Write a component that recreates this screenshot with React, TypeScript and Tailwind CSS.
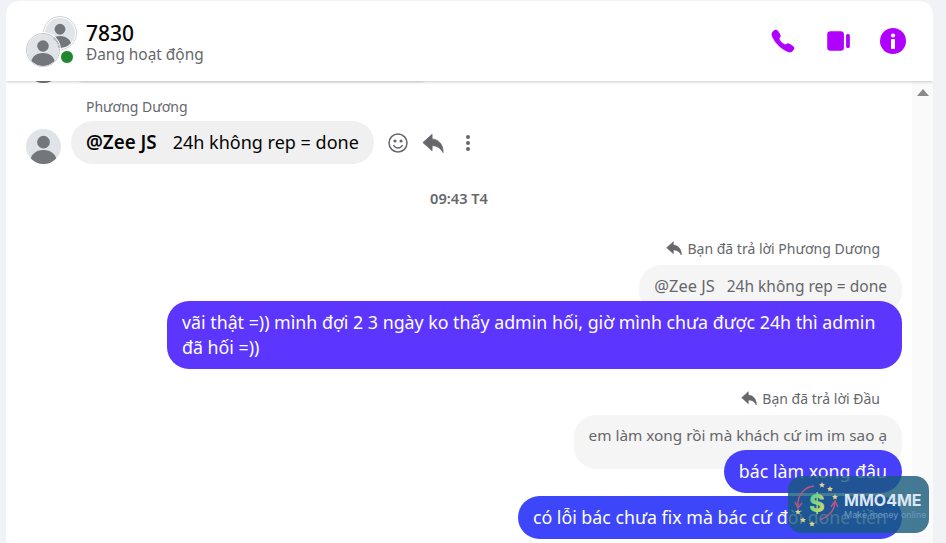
import React from "react";
import { IoCall } from "react-icons/io5";

const Avatar = ({ size }: { size: string }) => (
  <div className={`${size} rounded-full overflow-hidden bg-[#e0e3e7] shrink-0`}>
    <svg viewBox="0 0 36 36" className="w-full h-full">
      <circle cx="18" cy="13.5" r="6.5" fill="#73767b" />
      <path d="M4 36c0-10 6-14.5 14-14.5S32 26 32 36z" fill="#73767b" />
    </svg>
  </div>
);

const ReplyIcon = ({ className }: { className: string }) => (
  <svg viewBox="0 0 24 24" className={className} fill="#65676b">
    <path d="M11 2.500 1 11.500 11 20.500 V15 C16 15 20 17 23 22.500 C23.500 13.500 18 8 11 7.500 Z" stroke="#65676b" strokeWidth="0.8" strokeLinejoin="round" />
  </svg>
);

const Sent = ({ color, text }: { color: string; text: React.ReactNode }) => (
  <div className={`relative px-[15px] py-[9px] rounded-[22px] text-[17.8px] leading-[25px] text-white ${color}`}>{text}</div>
);

const ReplyLabel = ({ text }: { text: string }) => (
  <div className="flex items-center justify-end gap-[5px] pr-[22px] h-[20px] text-[14px] text-[#65676b]">
    <ReplyIcon className="w-[16px] h-[16px]" />
    <span>{text}</span>
  </div>
);

const Star = ({ x, y }: { x: number; y: number }) => (
  <polygon
    transform={`translate(${x} ${y})`}
    points="0,-3 0.9,-1 3,-0.9 1.4,0.5 1.9,2.6 0,1.5 -1.9,2.6 -1.4,0.5 -3,-0.9 -0.9,-1"
    fill="#e6d48a"
  />
);

export default function App() {
  return (
    <div className="relative w-[946px] h-[543px] overflow-hidden bg-[#f0f2f5] pl-[6px] pr-[13px] pt-[1px] font-['Noto_Sans','Open_Sans',sans-serif]">
      <div className="w-full h-[542px] bg-white rounded-t-[14px] flex flex-col overflow-hidden">
        <header className="relative z-10 h-[80px] shrink-0 flex items-center justify-between pl-[20px] pr-[27px] bg-white shadow-[0_1px_3px_rgba(0,0,0,0.2)]">
          <div className="flex items-center gap-[8px]">
            <div className="relative w-[52px] h-[52px]">
              <div className="absolute left-[17px] top-[1px] w-[34px] h-[34px] rounded-full bg-white border border-[#d0d2d6] p-[1px]">
                <Avatar size="w-full h-full" />
              </div>
              <div className="absolute left-0 bottom-0 w-[34px] h-[34px] rounded-full border border-[#c8cacd] overflow-hidden shadow-[0_0_0_1px_#fff]">
                <Avatar size="w-full h-full" />
              </div>
              <div className="absolute left-[34px] top-[35px] w-[14px] h-[14px] rounded-full bg-[#22852f] border border-white" />
            </div>
            <div className="flex flex-col mt-[4px]">
              <span className="text-[21px] leading-[24px] font-medium text-[#050505]">7830</span>
              <span className="text-[15.4px] leading-[20px] text-[#65676b]">Đang hoạt động</span>
            </div>
          </div>
          <div className="flex items-center gap-[28px]">
            <IoCall className="w-[26px] h-[26px] text-[#b000ff]" />
            <svg viewBox="0 0 26 24" className="w-[28px] h-[26px]" fill="#b000ff">
              <rect x="3" y="3" width="15.5" height="18" rx="3" />
              <rect x="20.5" y="5.5" width="3.5" height="13" rx="1.5" />
            </svg>
            <svg viewBox="0 0 26 26" className="w-[26px] h-[26px]">
              <circle cx="13" cy="13" r="13" fill="#b000ff" />
              <circle cx="13" cy="7.5" r="2.1" fill="#fff" />
              <rect x="11" y="11" width="4" height="10" rx="1" fill="#fff" />
            </svg>
          </div>
        </header>

        <div className="relative flex-1 flex min-h-0">
          <main className="flex-1 min-w-0 overflow-hidden">
            <div className="mt-[-33px] pl-[20px] flex items-end gap-[10px]">
              <Avatar size="w-[35px] h-[35px]" />
              <div className="w-[362px] h-[27px] rounded-[18px] bg-[#f0f0f0]" />
            </div>
            <div className="pl-[80px] mt-[14px] h-[20px] text-[14px] leading-[20px] text-[#65676b]">Phương Dương</div>
            <div className="mt-[4px] pl-[20px] flex items-center gap-[10px]">
              <Avatar size="w-[35px] h-[35px] mt-[8px]" />
              <div className="h-[43px] flex items-center px-[15px] rounded-[22px] bg-[#f0f0f0] text-[18px] text-[#050505] whitespace-pre">
                <b className="font-semibold text-[18.8px]">@Zee JS</b>
                <span className="ml-[2px]">   24h không rep = done</span>
              </div>
              <div className="flex items-center gap-[11px] ml-[2px]">
                <svg viewBox="0 0 24 24" className="w-[24px] h-[24px]" fill="none" stroke="#65676b" strokeWidth="1.5">
                  <circle cx="12" cy="12" r="9" />
                  <circle cx="9" cy="10" r=".8" fill="#65676b" />
                  <circle cx="15" cy="10" r=".8" fill="#65676b" />
                  <path d="M7.5 14c1 2 2.600 3 4.500 3s3.500-1 4.500-3" />
                </svg>
                <ReplyIcon className="w-[22px] h-[22px] mx-[1px]" />
                <svg viewBox="0 0 24 24" className="w-[24px] h-[24px]" fill="#65676b">
                  <circle cx="12" cy="6" r="2" /><circle cx="12" cy="12" r="2" /><circle cx="12" cy="18" r="2" />
                </svg>
              </div>
            </div>
            <div className="mt-[24px] text-center text-[14.6px] leading-[20px] font-semibold text-[#65676b]">09:43 T4</div>

            <div className="mt-[30px] flex flex-col items-end pr-[10px]">
              <ReplyLabel text="Bạn đã trả lời Phương Dương" />
              <div className="mt-[7px] h-[48px] pt-[9px] px-[15px] rounded-[22px] bg-[#f5f5f5] text-[15.5px] leading-[24px] text-[#65676b] whitespace-pre">
                <span className="text-[16.4px]">@Zee JS</span>   24h không rep = done
              </div>
              <div className="mt-[-12px] w-[735px]">
                <Sent color="bg-[#5c35ff]" text="vãi thật =)) mình đợi 2 3 ngày ko thấy admin hối, giờ mình chưa được 24h thì admin đã hối =))" />
              </div>

              <div className="mt-[19px] w-full"><ReplyLabel text="Bạn đã trả lời Đầu" /></div>
              <div className="mt-[7px] h-[54px] pt-[8px] px-[15px] rounded-[22px] bg-[#f5f5f5] text-[15.3px] leading-[24px] text-[#65676b]">em làm xong rồi mà khách cứ im im sao ạ</div>
              <div className="mt-[-19px]">
                <Sent color="bg-[#4740fb]" text="bác làm xong đâu" />
              </div>
              <div className="mt-[3px]">
                <Sent color="bg-[#3d46f8]" text="có lỗi bác chưa fix mà bác cứ đòi done tiền" />
              </div>
            </div>
          </main>
          <div className="w-[21px] shrink-0 bg-[#fafafa] flex justify-center pt-[8px]">
            <div className="w-0 h-0 border-x-[6.5px] border-x-transparent border-b-[7px] border-b-[#8a8a8a]" />
          </div>
        </div>
      </div>

      <div className="absolute left-[788px] top-[476px] w-[141px] h-[57px] rounded-[14px] bg-[#16597a]/80 flex items-center">
        <svg viewBox="0 0 54 57" className="w-[54px] h-[57px] shrink-0">
          <defs>
            <linearGradient id="dollar" x1="0" y1="0" x2="1" y2="1">
              <stop offset="0" stopColor="#3fc9a0" />
              <stop offset="1" stopColor="#e6e05a" />
            </linearGradient>
          </defs>
          <path d="M26 10C16 11 9 20 10 30" fill="none" stroke="#c2557f" strokeWidth="1.4" />
          <path d="M7 26l3 6 4-5" fill="none" stroke="#c2557f" strokeWidth="1.4" />
          <path d="M32 44C41 40 47 35 47 26" fill="none" stroke="#c2557f" strokeWidth="1.4" />
          <path d="M43 31l4-6 3 6" fill="none" stroke="#c2557f" strokeWidth="1.4" />
          <text x="29" y="36" textAnchor="middle" fontSize="24" fontWeight="800" fill="url(#dollar)" fontFamily="Inter, sans-serif">$</text>
          <Star x={34} y={9} /><Star x={42} y={13} /><Star x={47} y={21} />
          <Star x={10} y={36} /><Star x={15} y={44} /><Star x={24} y={48} />
        </svg>
        <div className="ml-[2px] flex flex-col mt-[2px]">
          <span className="text-[16px] leading-[18px] font-bold text-[#dbe6f2] font-['Inter',sans-serif]">MMO4ME</span>
          <span className="text-[9px] leading-[12px] text-[#6b97c2] font-['Inter',sans-serif] whitespace-nowrap">Make money online</span>
        </div>
      </div>
    </div>
  );
}
